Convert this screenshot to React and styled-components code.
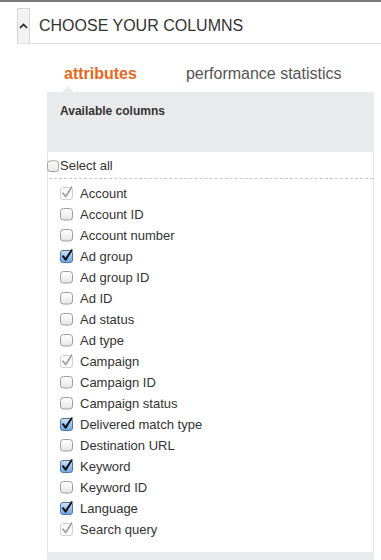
import React from "react";
import styled, { createGlobalStyle } from "styled-components";

const Global = createGlobalStyle`
  html, body { margin: 0; padding: 0; background: #fff; }
  body { font-family: "Liberation Sans", Arial, Helvetica, sans-serif; color: #333; }
`;

const Page = styled.div`
  border-top: 2px solid #7b7b7b;
  padding-top: 6px;
  width: 381px;
  height: 558px;
  overflow: hidden;
`;

const Header = styled.div`
  display: flex;
  align-items: stretch;
  margin-left: 17px;
  height: 35px;
  border-bottom: 1px solid #dcdcdc;
`;

const Toggle = styled.div`
  width: 13px;
  border: 1px solid #d6d6d8;
  border-bottom: none;
  background: #f3f3f5;
  display: flex;
  align-items: flex-start;
  justify-content: center;
  padding-top: 14px;
  box-sizing: border-box;
`;

const Title = styled.div`
  margin-left: 9px;
  padding-top: 9px;
  font-size: 16px;
  line-height: 18px;
  color: #333;
`;

const Tabs = styled.div`
  display: flex;
  gap: 49px;
  margin-top: 21px;
  padding-left: 64px;
`;

const Tab = styled.div`
  font-size: 16px;
  line-height: 18px;
  font-weight: ${(p) => (p.$active ? 700 : 400)};
  color: ${(p) => (p.$active ? "#e8671d" : "#555")};
`;

const Panel = styled.div`
  position: relative;
  margin-top: 9px;
  margin-left: 47px;
  width: 327px;
`;

const Pointer = styled.div`
  position: absolute;
  top: -6px;
  left: 15px;
  width: 0;
  height: 0;
  border-left: 6px solid transparent;
  border-right: 6px solid transparent;
  border-bottom: 6px solid #ebecee;
`;

const PanelHead = styled.div`
  height: 60px;
  box-sizing: border-box;
  background: #e9eaec;
  padding: 12px 0 0 13px;
  font-size: 12px;
  line-height: 14px;
  font-weight: 700;
  color: #333;
`;

const PanelBody = styled.div`
  border-left: 1px solid #e4e4e6;
  border-right: 1px solid #e4e4e6;
  padding-top: 6px;
  padding-bottom: 12px;
  background: #fff;
`;

const SelectAllRow = styled.label`
  display: flex;
  align-items: center;
  font-size: 13px;
  line-height: 16px;
  color: #333;
  margin-left: -1px;
  padding-bottom: 4px;
`;

const Dashed = styled.div`
  border-top: 1px dashed #c9c9c9;
  margin: 0 0 4px 1px;
`;

const List = styled.ul`
  list-style: none;
  margin: 0;
  padding: 0 0 0 12px;
`;

const Item = styled.li`
  display: flex;
  align-items: flex-start;
  height: 21px;
  font-size: 13px;
  line-height: 21px;
  color: #333;
`;

const BoxWrap = styled.span`
  display: inline-flex;
  width: ${(p) => p.$w}px;
  height: 14px;
  margin-top: ${(p) => p.$mt}px;
  flex-shrink: 0;
`;

const Footer = styled.div`
  height: 30px;
  background: #e9eaec;
`;

function Checkbox({ state, w = 20, mt = 3 }) {
  const id = React.useId().replace(/:/g, "");
  return (
    <BoxWrap $w={w} $mt={mt}>
      <svg width="14" height="14" viewBox="0 0 14 14">
        <defs>
          <linearGradient id={`u${id}`} x1="0" y1="0" x2="0" y2="1">
            <stop offset="0" stopColor="#ffffff" />
            <stop offset="1" stopColor="#e6e6e6" />
          </linearGradient>
          <linearGradient id={`c${id}`} x1="0" y1="0" x2="0" y2="1">
            <stop offset="0" stopColor="#cfe2f7" />
            <stop offset="0.5" stopColor="#9cc3ee" />
            <stop offset="1" stopColor="#6fa5e3" />
          </linearGradient>
        </defs>
        {state === "checked" ? (
          <>
            <rect x="0.5" y="1.5" width="12" height="12" rx="2.5" fill={`url(#c${id})`} stroke="#4f77ad" />
            <path d="M3 7.2 L5.6 10.6 L11.6 1.2" fill="none" stroke="#111" strokeWidth="2" strokeLinecap="round" strokeLinejoin="round" />
          </>
        ) : state === "disabled" ? (
          <>
            <rect x="0.5" y="1.5" width="12" height="12" rx="2.5" fill="#fbfbfb" stroke="#cfcfcf" />
            <path d="M3 7.2 L5.6 10.6 L11.6 1.2" fill="none" stroke="#9a9a9a" strokeWidth="1.6" strokeLinecap="round" strokeLinejoin="round" />
          </>
        ) : (
          <rect x="0.5" y="1.5" width="12" height="11.5" rx="3" fill={`url(#u${id})`} stroke="#9d9d9d" />
        )}
      </svg>
    </BoxWrap>
  );
}

const items = [
  ["Account", "disabled"],
  ["Account ID", "off"],
  ["Account number", "off"],
  ["Ad group", "checked"],
  ["Ad group ID", "off"],
  ["Ad ID", "off"],
  ["Ad status", "off"],
  ["Ad type", "off"],
  ["Campaign", "disabled"],
  ["Campaign ID", "off"],
  ["Campaign status", "off"],
  ["Delivered match type", "checked"],
  ["Destination URL", "off"],
  ["Keyword", "checked"],
  ["Keyword ID", "off"],
  ["Language", "checked"],
  ["Search query", "disabled"],
];

export default function App() {
  return (
    <>
      <Global />
      <Page>
        <Header>
          <Toggle>
            <svg width="9" height="6" viewBox="0 0 9 6">
              <path d="M1 5 L4.5 1.5 L8 5" fill="none" stroke="#222" strokeWidth="1.7" />
            </svg>
          </Toggle>
          <Title>CHOOSE YOUR COLUMNS</Title>
        </Header>
        <Tabs>
          <Tab $active>attributes</Tab>
          <Tab>performance statistics</Tab>
        </Tabs>
        <Panel>
          <Pointer />
          <PanelHead>Available columns</PanelHead>
          <PanelBody>
            <SelectAllRow>
              <Checkbox state="off" w={13} mt={0} />
              Select all
            </SelectAllRow>
            <Dashed />
            <List>
              {items.map(([label, st]) => (
                <Item key={label}>
                  <Checkbox state={st} />
                  {label}
                </Item>
              ))}
            </List>
          </PanelBody>
          <Footer />
        </Panel>
      </Page>
    </>
  );
}
